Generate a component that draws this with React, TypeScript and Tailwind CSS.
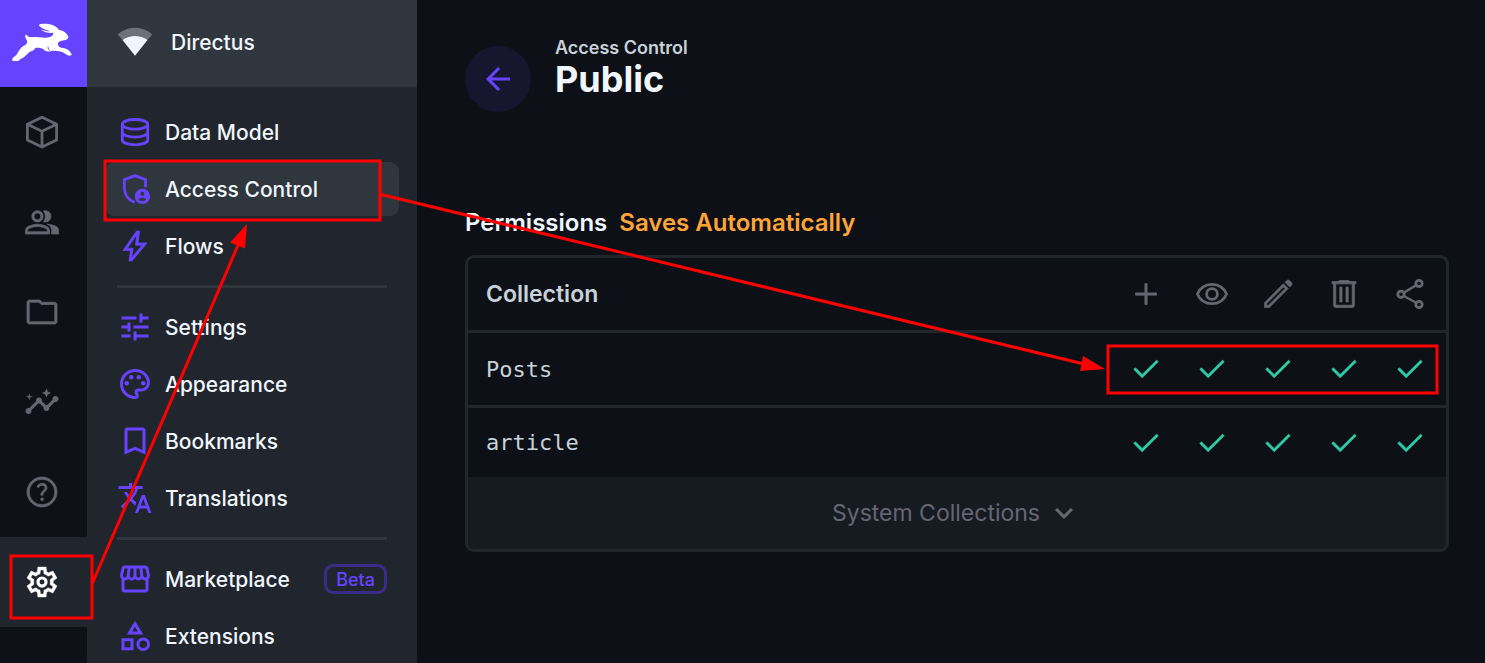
import type { ReactNode } from "react";
import {
  MdArrowBack,
  MdBookmarkBorder,
  MdExpandMore,
  MdInsights,
  MdOutlineCategory,
  MdOutlinePalette,
  MdOutlineStorefront,
  MdTranslate,
  MdTune,
} from "react-icons/md";

function Symbol({ d, children, weight = 20 }: { d?: string; children?: ReactNode; weight?: number }) {
  return (
    <svg viewBox="0 -960 960 960" fill="currentColor" className="size-9 shrink-0" aria-hidden="true">
      {d && <path d={d} stroke="currentColor" strokeWidth={weight} />}
      {children}
    </svg>
  );
}

const paths = {
  add: "M450-450H200v-60h250v-250h60v250h250v60H510v250h-60v-250Z",
  edit: "M180-180h44l443-443-44-44-443 443v44Zm614-486L666-794l42-42q17-17 42-17t42 17l44 44q17 17 17 42t-17 42l-42 42Zm-42 42L248-120H120v-128l504-504 128 128Z",
  trash:
    "M261-120q-24.75 0-42.375-17.625T201-180v-570h-41v-60h188v-30h264v30h188v60h-41v570q0 24-18 42t-42 18H261Zm438-630H261v570h438v-570ZM367-266h60v-399h-60v399Zm166 0h60v-399h-60v399Z",
  check: "M378-246 154-470l43-43 181 181 384-384 43 43-427 427Z",
  folder:
    "M140-160q-24 0-42-18.500T80-220v-520q0-23 18-41.500t42-18.500h281l60 60h339q23 0 41.500 18.500T880-680v460q0 23-18.500 41.500T820-160H140Zm0-60h680v-460H456l-60-60H140v520Z",
  group:
    "M38-160v-94q0-35 18-63.500t50-42.500q73-32 131.500-46T358-420q62 0 120 14t131 46q32 14 50.500 42.500T678-254v94H38Zm700 0v-94q0-63-32-103.500T622-423q69 8 130 23.500t99 35.500q33 19 52 47t19 63v94H738ZM358-481q-66 0-108-42t-42-108q0-66 42-108t108-42q66 0 108 42t42 108q0 66-42 108t-108 42Zm360-150q0 66-42 108t-108 42q-11 0-24.500-1.500T519-488q24-25 36.500-61.500T568-631q0-45-12.500-79.500T519-774q11-3 24.500-5t24.500-2q66 0 108 42t42 108ZM98-220h520v-34q0-16-9.500-31T585-306q-72-32-121-43t-106-11q-57 0-106.500 11T130-306q-14 6-23 21t-9 31v34Zm260-321q39 0 64.500-25.500T448-631q0-39-25.500-64.500T358-721q-39 0-64.500 25.500T268-631q0 39 25.500 64.500T358-541Z",
  help: "M484-247q16 0 27-11t11-27q0-16-11-27t-27-11q-16 0-27 11t-11 27q0 16 11 27t27 11Zm-35-146h59q0-26 6.500-47.500T555-490q31-26 44-51t13-55q0-53-34.500-85T486-713q-49 0-86.500 24.500T345-621l53 20q11-28 33-43.500t52-15.500q34 0 55 18.500t21 47.500q0 22-13 41.500T508-512q-30 26-44.500 51.500T449-393Zm31 313q-82 0-155-31.500t-127.500-86Q143-252 111.500-325T80-480q0-83 31.500-156t86-127Q252-817 325-848.500T480-880q83 0 156 31.500T763-763q54 54 85.500 127T880-480q0 82-31.500 155T763-197.500q-54 54.500-127 86T480-80Zm0-60q142 0 241-99.500T820-480q0-142-99-241t-241-99q-141 0-240.500 99T140-480q0 141 99.500 240.500T480-140Z",
  gear: "m370-80-16-128q-13-5-24.500-12T307-235l-119 50L78-375l103-78q-1-7-1-13.500v-27q0-6.500 1-13.500L78-585l110-190 119 50q11-8 23-15t24-12l16-128h220l16 128q13 5 24.500 12t22.500 15l119-50 110 190-103 78q1 7 1 13.500v27q0 6.500-2 13.500l103 78-110 190-118-50q-11 8-23 15t-24 12L590-80H370Zm70-80h79l14-106q31-8 57.500-23.500T639-327l99 41 39-68-86-65q5-14 7-29.500t2-31.500q0-16-2-31.500t-7-29.500l86-65-39-68-99 42q-22-23-48.500-38.500T533-694l-13-106h-79l-14 106q-31 8-57.500 23.500T321-633l-99-41-39 68 86 64q-5 15-7 30t-2 32q0 16 2 31t7 30l-86 65 39 68 99-42q22 23 48.500 38.500T427-266l13 106Z",
  bolt: "m393-165 279-335H492l36-286-253 366h154l-36 255Zm-73 85 40-280H160l360-520h80l-40 320h240L400-80h-80Z",
};

function LineIcon({ children }: { children: ReactNode }) {
  return (
    <svg viewBox="0 0 36 36" fill="none" stroke="currentColor" strokeWidth="2.800" strokeLinejoin="round" className="size-9 shrink-0" aria-hidden="true">
      {children}
    </svg>
  );
}

function CubeIcon() {
  return (
    <LineIcon>
      <path d="M18 3.300 32.600 10.200V26L18 33 3.400 26V10.200ZM3.400 10.200 18 17.200l14.600-7M18 17.200V33" />
    </LineIcon>
  );
}

function DatabaseIcon() {
  return (
    <LineIcon>
      <ellipse cx="18" cy="10.300" rx="12.700" ry="4.800" />
      <path d="M5.300 10.300v15.600c0 2.800 5.700 4.900 12.700 4.900s12.700-2.100 12.700-4.900V10.300M5.300 18.300c0 2.700 5.700 4.800 12.700 4.800s12.700-2.100 12.700-4.800" />
    </LineIcon>
  );
}

function EyeIcon() {
  return (
    <LineIcon>
      <path d="M3.400 18C6 12 11.500 8.300 18 8.300S30 12 32.600 18C30 24 24.500 27.700 18 27.700S6 24 3.400 18Z" />
      <circle cx="18" cy="18" r="5.400" />
    </LineIcon>
  );
}

function ShareIcon() {
  return (
    <LineIcon>
      <circle cx="9" cy="18.300" r="3.200" />
      <circle cx="27" cy="7.500" r="3.200" />
      <circle cx="27" cy="28.500" r="3.200" />
      <path d="M11.800 16.600 24.200 9.200M11.800 20 24.200 26.800" strokeWidth="2.400" />
    </LineIcon>
  );
}

function ShieldPersonIcon() {
  return (
    <LineIcon>
      <path d="M28.500 16.300V8.600L18 4.600 7.300 8.600V16.500C7.300 23.300 11.500 29 17.600 31.400" strokeLinejoin="miter" />
      <circle cx="25.400" cy="25.400" r="7.700" fill="currentColor" stroke="none" />
      <circle cx="25.400" cy="22.800" r="2" fill="#30363d" stroke="none" />
      <path d="M21.600 28.400C22.500 26.200 28.300 26.200 29.200 28.400 27.500 30.600 23.300 30.600 21.600 28.400Z" fill="#30363d" stroke="none" />
    </LineIcon>
  );
}

function Logo() {
  return (
    <svg viewBox="0 0 60 38" fill="white" className="h-[38px] w-[60px]" aria-hidden="true">
      <path d="M.4 35.600c.7-1.600 3.400-2.400 4.600-4.600 1.900-3.500 3.600-6.800 6.800-8.300 2.300-1 3.300-2 3.300-4.200 0-1.500-2-3.200-1.900-5.300 0-1.200.6-1.700 1.400-1.500 1.500 2.500 3.200 2.500 4.800 2.400 6.200-.2 14.500 1.600 18.600-.1 2.200-.9 3.500-2.400 3.300-4.200-3.900.4-9.300-.3-12.700-3.300 3.800 1.500 7.300 1.900 10 1.700-4.700-.9-8.500-2.900-11.400-5.200-.5-1.500.7-2 1.800-2.100 8.200-.4 14.600 1.200 17.900 5.800 3.400.7 6.900 2.400 8.400 5.300 1.500 1 1.200 3.400-.3 4.300-2.400 1.500-5.600.6-8.400 3-1.500 1.300-.5 3.700 1.400 5 3.800 1.200 8.500 1.100 10.900 5.800 1.200 1.400.7 2.500-.5 2.500-3.800.2-5.900-3.500-9.800-4.200-3.700-.4-7.300-1-9.900-.2-2.200 1-6.300.2-7.400-2.100-2.500-.9-5.300-1.600-8-1.100-1.400 3.200-4.500 3-5.900 4.100-3.300 3-5.500 6.200-9 6.900-1.400 1.600-3 3.100-5.300 3.400-1.900.5-3.100.4-2.700-1.800Z" />
      <path d="M36 23.500c.1 2.200.8 3.600 2.200 4.600" fill="none" stroke="#6644ff" strokeWidth=".8" />
    </svg>
  );
}

function SignalIcon() {
  return (
    <svg viewBox="0 0 36 36" className="size-9 shrink-0" aria-hidden="true">
      <path d="M.7 10.500C10.500 1.500 25.500 1.500 35.300 10.500L30.500 16C23 10.500 13 10.500 5.500 16Z" fill="#6c7279" />
      <path d="M5.500 16C12.500 10.700 23.500 10.700 30.500 16L18 31.700Z" fill="#f0f4ff" />
    </svg>
  );
}

const modules = [
  { label: "Content", icon: <CubeIcon /> },
  { label: "User Directory", icon: <Symbol d={paths.group} /> },
  { label: "File Library", icon: <Symbol d={paths.folder} /> },
  { label: "Insights", icon: <MdInsights size={36} /> },
  { label: "Documentation", icon: <Symbol d={paths.help} /> },
  {
    label: "Settings",
    active: true,
    icon: (
      <Symbol d={paths.gear} weight={10}>
        <circle cx="480" cy="-480" r="108" fill="none" stroke="currentColor" strokeWidth="84" />
      </Symbol>
    ),
  },
];

type NavEntry = { label: string; icon: ReactNode; active?: boolean; badge?: string };

const navGroups: NavEntry[][] = [
  [
    { label: "Data Model", icon: <DatabaseIcon /> },
    { label: "Access Control", icon: <ShieldPersonIcon />, active: true },
    { label: "Flows", icon: <Symbol d={paths.bolt} /> },
  ],
  [
    { label: "Settings", icon: <MdTune size={36} /> },
    { label: "Appearance", icon: <MdOutlinePalette size={36} /> },
    { label: "Bookmarks", icon: <MdBookmarkBorder size={36} /> },
    { label: "Translations", icon: <MdTranslate size={36} /> },
  ],
  [
    { label: "Marketplace", icon: <MdOutlineStorefront size={36} />, badge: "Beta" },
    { label: "Extensions", icon: <MdOutlineCategory size={36} /> },
  ],
];

const actions = [
  { label: "Create", icon: <Symbol d={paths.add} /> },
  { label: "Read", icon: <EyeIcon /> },
  { label: "Update", icon: <Symbol d={paths.edit} /> },
  { label: "Delete", icon: <Symbol d={paths.trash} /> },
  { label: "Share", icon: <ShareIcon /> },
];

const collections = ["Posts", "article"];

function ModuleBar() {
  return (
    <nav aria-label="Modules" className="w-[87px] shrink-0 bg-[#0e1118]">
      <a href="#home" aria-label="Home" className="flex h-[87px] items-center bg-[#6644ff] pb-1 pl-3">
        <Logo />
      </a>
      {modules.map((m) => (
        <a
          key={m.label}
          href="#module"
          aria-label={m.label}
          className={
            m.active
              ? "flex h-[90px] items-center bg-[#21262e] pl-6 text-white"
              : "flex h-[90px] items-center pl-6 text-[#666672]"
          }
        >
          {m.icon}
        </a>
      ))}
    </nav>
  );
}

function Navigation() {
  return (
    <aside className="w-[330px] shrink-0 bg-[#21262e] text-[21px] text-[#f0f6fc]">
      <div className="flex h-[87px] items-center gap-[18px] bg-[#30363d] pb-[3px] pl-[30px]">
        <SignalIcon />
        <span className="pt-px">Directus</span>
      </div>
      <nav aria-label="Settings" className="px-[18px] pt-[18px]">
        {navGroups.map((group, i) => (
          <div key={group[0].label}>
            {i > 0 && <hr className="mx-3 my-3 border-0 border-t-[3px] border-[#30363d]" />}
            <ul className="flex flex-col gap-[3px]">
              {group.map((item) => (
                <li key={item.label}>
                  <a
                    href="#section"
                    className={
                      item.active
                        ? "flex h-[54px] items-center gap-3 rounded-[9px] bg-[#30363d] px-3"
                        : "flex h-[54px] items-center gap-3 rounded-[9px] px-3"
                    }
                  >
                    <span className="text-[#6644ff]">{item.icon}</span>
                    <span className="flex-1 pt-px">{item.label}</span>
                    {item.badge && (
                      <span className="flex h-[30px] items-center rounded-[9px] border-[3px] border-[#3a2c86] px-[9px] text-[18px] text-[#6644ff]">
                        {item.badge}
                      </span>
                    )}
                  </a>
                </li>
              ))}
            </ul>
          </div>
        ))}
      </nav>
    </aside>
  );
}

function PermissionsTable() {
  return (
    <div className="mt-[17px] overflow-hidden rounded-[9px] border-[3px] border-[#21262e]">
      <table className="w-full border-separate border-spacing-0 text-[#c9d1d9]">
        <thead>
          <tr>
            <th scope="col" className="h-[75px] border-b-[3px] border-[#21262e] pl-[18px] text-left text-[23px] font-semibold">
              Collection
            </th>
            {actions.map((a) => (
              <th
                key={a.label}
                scope="col"
                aria-label={a.label}
                className="w-[66px] border-b-[3px] border-[#21262e] pl-3 text-[#666672]"
              >
                {a.icon}
              </th>
            ))}
          </tr>
        </thead>
        <tbody>
          {collections.map((name) => (
            <tr key={name} className="group">
              <th
                scope="row"
                className="h-[75px] border-b-[3px] border-[#21262e] pl-[18px] text-left font-['DejaVu_Sans_Mono',monospace] text-[22px] font-normal group-last:h-[69px] group-last:border-b-0"
              >
                {name}
              </th>
              {actions.map((a) => (
                <td key={a.label} className="border-b-[3px] border-[#21262e] pl-3 group-last:border-b-0">
                  <button type="button" aria-label={`${a.label} ${name}`} className="block text-[#2ecda7]">
                    <Symbol d={paths.check} />
                  </button>
                </td>
              ))}
            </tr>
          ))}
        </tbody>
      </table>
      <button type="button" className="flex h-[72px] w-full items-center justify-center gap-[6px] bg-[#161b22] text-[23px] font-normal text-[#666672]">
        System Collections
        <MdExpandMore size={36} />
      </button>
    </div>
  );
}

function Annotations() {
  return (
    <svg className="pointer-events-none absolute top-0 left-0 h-[663px] w-[1485px]" viewBox="0 0 1485 663" aria-hidden="true">
      <g fill="none" stroke="#ff0000" strokeWidth="3">
        <rect x="11" y="556" width="81" height="62" />
        <rect x="105" y="161" width="275" height="59" />
        <rect x="1108" y="346" width="329" height="47" />
        <path d="M92.500 583 239 243M381 194.500 1084 364" />
      </g>
      <path d="M247 224 245 248.500 230 242.500ZM1105 369 1080 371 1083 356Z" fill="#ff0000" />
    </svg>
  );
}

export default function App() {
  return (
    <div className="relative flex min-h-screen overflow-hidden bg-[#0d1117] font-['Inter',sans-serif] font-medium">
      <ModuleBar />
      <Navigation />
      <main className="min-w-0 flex-1 pt-9 pr-9 pl-12">
        <header className="flex items-start gap-6">
          <button
            type="button"
            aria-label="Back"
            className="mt-[10px] flex size-[66px] items-center justify-center rounded-full bg-[#16162e] text-[#6644ff]"
          >
            <MdArrowBack size={36} />
          </button>
          <div>
            <p className="text-[18px] leading-6 font-semibold text-[#c9d1d9]">Access Control</p>
            <h1 className="text-[36px] leading-[38px] font-bold text-[#f0f6fc]">Public</h1>
          </div>
        </header>
        <h2 className="mt-[95px] flex gap-3 text-[24px] leading-[31px] font-semibold text-[#f0f6fc]">
          Permissions <span className="text-[#ffa439]">Saves Automatically</span>
        </h2>
        <PermissionsTable />
      </main>
      <Annotations />
    </div>
  );
}
